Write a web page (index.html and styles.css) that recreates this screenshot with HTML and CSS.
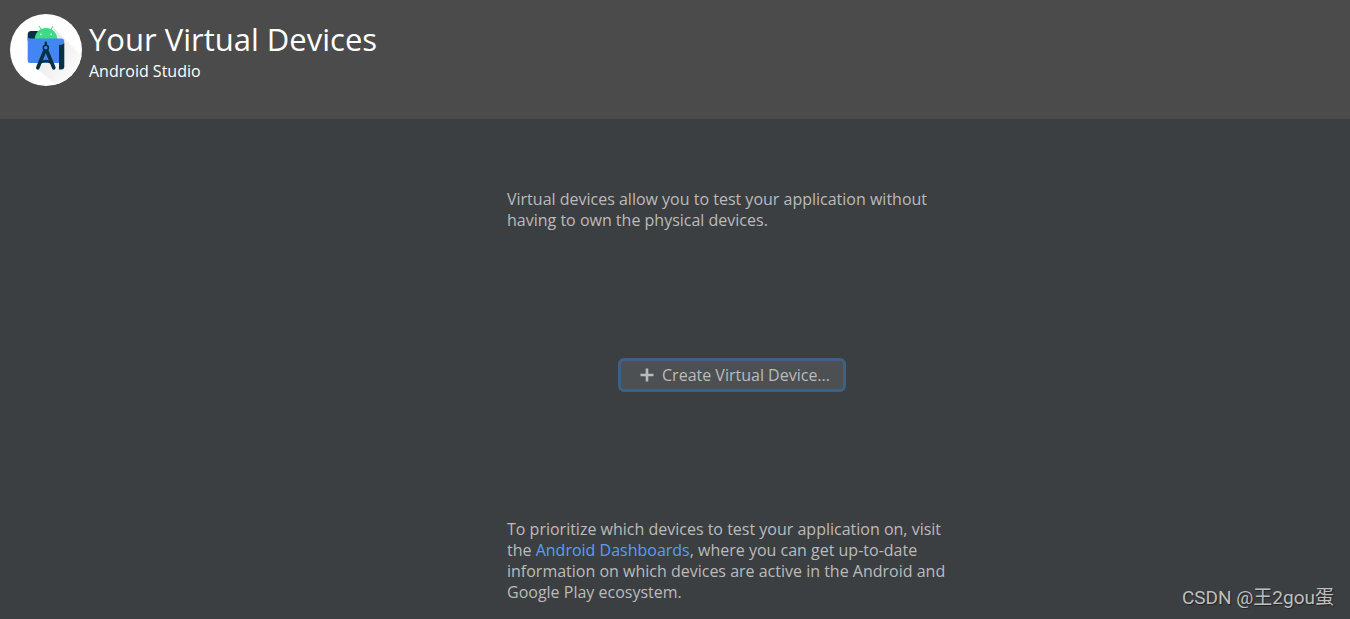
FILE: index.html
```html
<!DOCTYPE html>
<html lang="en">
<head>
<meta charset="utf-8">
<title>Your Virtual Devices</title>
<link rel="stylesheet" href="styles.css">
</head>
<body>
<header class="header">
  <svg class="logo" viewBox="0 0 72 72" aria-hidden="true">
    <defs>
      <clipPath id="disc"><circle cx="36" cy="36" r="36"/></clipPath>
      <linearGradient id="shade" x1="0" y1="0" x2="1" y2="1"><stop offset="0.2" stop-color="#e8e8e8"/><stop offset="0.8" stop-color="#fdfdfd"/></linearGradient>
    </defs>
    <circle cx="36" cy="36" r="36" fill="#fff"/>
    <path d="M43 13L76 46V76H50L27 54L47 40Z" fill="url(#shade)" clip-path="url(#disc)"/>
    <path d="M29.2 12.3l2.8 4.7M42.8 12.3l-2.8 4.7" stroke="#3ddc84" stroke-width="1" stroke-linecap="round"/>
    <path d="M17.7 27v-6.500a3.500 3.500 0 0 1 3.500-3.500H29v8H19Z" fill="#073042"/>
    <path d="M24.800 25a11.200 11 0 0 1 22.400 0Z" fill="#3ddc84"/>
    <circle cx="30.800" cy="20.300" r="0.900" fill="#fff"/><circle cx="41.200" cy="20.300" r="0.900" fill="#fff"/>
    <path d="M49 29H54.300V52.500q0 3-3 3H49Z" fill="#073042"/>
    <path d="M17.700 22.500q0 2 2.500 2H51a3.300 3.300 0 0 1 3.300 3.300q0 3.200-5.300 3.200V49H20.200a2.500 2.500 0 0 1-2.500-2.500Z" fill="#4285f4"/>
    <path d="M35.800 28.500v3" stroke="#073042" stroke-width="2.200" stroke-linecap="round"/>
    <circle cx="35.800" cy="33.800" r="2.500" fill="#4285f4" stroke="#073042" stroke-width="1.600"/>
    <path d="M34.500 37.500L27.800 53.800M37.100 37.500L43.800 53.800" stroke="#073042" stroke-width="3.600" stroke-linecap="round"/>
    <path d="M31 48.500Q35.800 45.500 40.600 48.500" fill="none" stroke="#073042" stroke-width="2.400"/>
  </svg>
  <div class="titles">
    <h1 class="title">Your Virtual Devices</h1>
    <p class="product">Android Studio</p>
  </div>
</header>
<main class="main">
  <div class="content">
    <p class="intro">Virtual devices allow you to test your application without<br>having to own the physical devices.</p>
    <button class="create" type="button"><svg class="plus" viewBox="0 0 14 14" aria-hidden="true"><path d="M7 0.500v13M0.500 7h13" stroke="currentColor" stroke-width="2.600"/></svg>Create Virtual Device...</button>
    <p class="note">To prioritize which devices to test your application on, visit<br>the <a class="link" href="#">Android Dashboards</a>, where you can get up-to-date<br>information on which devices are active in the Android and<br>Google Play ecosystem.</p>
  </div>
</main>
<footer class="credit">CSDN @王2gou蛋</footer>
</body>
</html>
```
FILE: styles.css
```css
* { box-sizing: border-box; }
body { margin: 0; min-height: 100vh; display: flex; flex-direction: column; position: relative; background: #3c3f41; color: #bbb; font: 16px/21px "Open Sans", "Noto Sans", sans-serif; }
h1, p { margin: 0; }
.header { display: flex; gap: 7px; padding: 14px 10px 33px; background: #4b4b4b; color: #fff; }
.logo { width: 72px; height: 72px; flex: none; }
.titles { padding-top: 4px; }
.title { font-size: 31px; line-height: 42px; font-weight: 400; }
.product { font-size: 16px; line-height: 22px; }
.main { flex: 1; display: flex; justify-content: center; padding: 70px 0 16px 114px; }
.content { width: 450px; display: flex; flex-direction: column; justify-content: space-between; }
.create { align-self: center; display: flex; align-items: center; gap: 8px; padding: 3px 13px 3px 19px; border: 3px solid #3d6185; border-radius: 6px; background: #4c5052; color: #bbb; font: inherit; line-height: 22px; }
.link { color: #589df6; text-decoration: none; }
.plus { width: 14px; height: 14px; }
.credit { position: absolute; right: 16px; bottom: 8px; color: #bebfc0; font: 19px/26px Roboto, "Noto Sans CJK SC", sans-serif; text-shadow: 1px 1px 1px #222; }
```
